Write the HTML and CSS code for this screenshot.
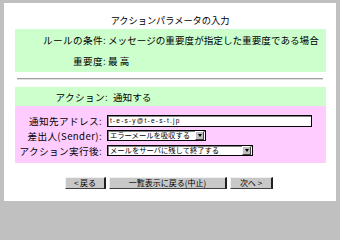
FILE: index.html
```html
<!DOCTYPE html>
<html lang="ja">
<head>
<meta charset="utf-8">
<title>アクションパラメータの入力</title>
<link rel="stylesheet" href="styles.css">
</head>
<body>
<div class="frame">
  <div class="title">アクションパラメータの入力</div>
  <div class="box green cond">
    <div class="row"><span class="lbl">ルールの条件:</span><span class="val">メッセージの重要度が指定した重要度である場合</span></div>
    <div class="row"><span class="lbl">重要度:</span><span class="val">最 高</span></div>
  </div>
  <div class="rule"></div>
  <div class="box green action">
    <div class="row"><span class="lbl">アクション:</span><span class="val">通知する</span></div>
  </div>
  <div class="box pink params">
    <div class="row"><span class="lbl">通知先アドレス:</span><span class="ctl"><span class="text-input">t-e-s-y@t-e-s-t.jp</span></span></div>
    <div class="row"><span class="lbl">差出人(Sender):</span><span class="ctl"><span class="select sel1"><span class="opt">エラーメールを吸収する</span><span class="arrow"></span></span></span></div>
    <div class="row"><span class="lbl">アクション実行後:</span><span class="ctl"><span class="select sel2"><span class="opt">メールをサーバに残して終了する</span><span class="arrow"></span></span></span></div>
  </div>
  <div class="buttons">
    <span class="btn b1">&lt; 戻る</span>
    <span class="btn b2">一覧表示に戻る(中止)</span>
    <span class="btn b3">次へ &gt;</span>
  </div>
</div>
</body>
</html>
```
FILE: styles.css
```css
html, body {
  margin: 0;
  padding: 0;
}
body {
  background: #c0c0c0;
  width: 340px;
  height: 204px;
  overflow: hidden;
  font-family: "Noto Sans CJK JP", "Noto Sans", sans-serif;
  color: #000;
}
.frame {
  background: #fff;
  margin: 3px 4px;
  height: 198px;
  box-sizing: border-box;
  padding-top: 11px;
  overflow: hidden;
}
.title {
  text-align: center;
  font-size: 9.2px;
  line-height: 12px;
  height: 12px;
  margin-bottom: 3px;
}
.box {
  margin: 0 10px 0 11px;
}
.green { background: #ccffcc; }
.pink { background: #ffccff; }
.row {
  display: grid;
  align-items: center;
  font-size: 9.6px;
  white-space: nowrap;
}
.lbl {
  text-align: right;
  letter-spacing: 0.4px;
}
.cond {
  height: 43px;
  box-sizing: border-box;
  padding: 1px 0;
  display: grid;
  row-gap: 1px;
}
.cond .row {
  grid-template-columns: 91px auto;
  column-gap: 2px;
  height: 20px;
}
.rule {
  margin: 6px 13px 7px 13px;
  border-top: 1px solid #a0a0a0;
  border-bottom: 1px solid #e0e0e0;
  height: 0;
}
.action {
  height: 19px;
  display: grid;
  align-items: center;
}
.action .row {
  grid-template-columns: 93px auto;
  column-gap: 5px;
  height: 19px;
}
.params {
  height: 57px;
  box-sizing: border-box;
  padding-top: 7px;
}
.params .row {
  grid-template-columns: 87px auto;
  column-gap: 5px;
  height: 15px;
}
.ctl {
  display: flex;
  align-items: center;
}
.text-input {
  display: block;
  width: 205px;
  height: 12px;
  box-sizing: border-box;
  border: 1px solid #000;
  box-shadow: inset 1px 1px 0 #808080;
  background: #fff;
  font-family: "Liberation Sans", sans-serif;
  font-size: 6.5px;
  letter-spacing: 1.2px;
  line-height: 10px;
  padding-left: 2px;
}
.select {
  display: flex;
  align-items: center;
  justify-content: space-between;
  height: 11px;
  box-sizing: border-box;
  border: 1px solid #000;
  box-shadow: inset 1px 1px 0 #808080;
  background: #fff;
  font-size: 7.3px;
  line-height: 9px;
  padding: 0 1px 0 2px;
}
.sel1 { width: 99px; }
.sel2 { width: 146px; }
.arrow {
  width: 9px;
  height: 9px;
  box-sizing: border-box;
  background: #c0c0c0;
  border-top: 1px solid #fff;
  border-left: 1px solid #fff;
  border-right: 1px solid #404040;
  border-bottom: 1px solid #404040;
  display: flex;
  align-items: center;
  justify-content: center;
  flex: none;
}
.arrow::before {
  content: "";
  width: 0;
  height: 0;
  border-left: 2.5px solid transparent;
  border-right: 2.5px solid transparent;
  border-top: 3px solid #000;
}
.buttons {
  display: flex;
  justify-content: center;
  gap: 3px;
  margin-top: 14px;
  padding-right: 2px;
}
.btn {
  display: flex;
  align-items: center;
  justify-content: center;
  height: 12px;
  box-sizing: border-box;
  background: #c8c8c8;
  border-top: 1px solid #f0f0f0;
  border-left: 1px solid #f0f0f0;
  border-right: 2px solid #202020;
  border-bottom: 1px solid #404040;
  font-size: 8px;
  line-height: 10px;
  white-space: nowrap;
}
.b1 { width: 41px; }
.b2 { width: 118px; }
.b3 { width: 43px; }
```
